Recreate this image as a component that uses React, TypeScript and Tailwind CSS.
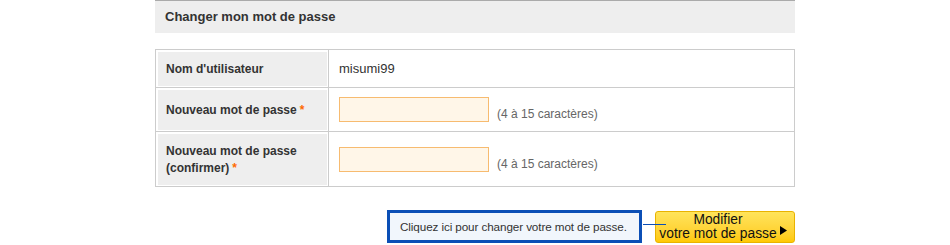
import React from 'react';

const FONT = '[font-family:"Liberation_Sans",Arial,sans-serif]';

function Row({ label, children, h }: { label: React.ReactNode; children: React.ReactNode; h: string }) {
  return (
    <div className={`flex ${h} border-b border-[#cccccc] last:border-b-0`}>
      <div className="w-[173px] shrink-0 border-r border-[#cccccc] pl-[2px] pr-[1px] pt-[2px] pb-[1px]">
        <div className="flex h-full items-center bg-[#eeeeee] pl-[8px] text-[12px] font-bold leading-[17px] text-[#333333]">
          {label}
        </div>
      </div>
      <div className="flex flex-1 items-center pl-[10px]">{children}</div>
    </div>
  );
}

function PasswordField() {
  return (
    <div className="flex items-end">
      <input
        type="password"
        className="h-[25px] w-[150px] border border-[#f7bb70] bg-[#fff6e8] outline-none"
      />
      <span className="mb-[1px] ml-[8px] text-[12px] leading-[14px] text-[#666666]">(4 à 15 caractères)</span>
    </div>
  );
}

const Star = () => <span className="ml-[3px] text-[#ff6a00]">*</span>;

export default function App() {
  return (
    <div className={`h-[245px] w-[950px] bg-white ${FONT}`}>
      <div className="mx-auto w-[640px]">
        <div className="flex h-[33px] items-center border-t border-[#aaaaaa] bg-[#eeeeee] pl-[10px] text-[13px] font-bold text-[#333333]">
          Changer mon mot de passe
        </div>

        <div className="mt-[16px] border border-[#cccccc]">
          <Row label="Nom d'utilisateur" h="h-[38px]">
            <span className="text-[13px] text-[#333333]">misumi99</span>
          </Row>
          <Row
            label={
              <span>
                Nouveau mot de passe<Star />
              </span>
            }
            h="h-[44px]"
          >
            <PasswordField />
          </Row>
          <Row
            label={
              <span>
                Nouveau mot de passe
                <br />
                (confirmer)<Star />
              </span>
            }
            h="h-[54px]"
          >
            <PasswordField />
          </Row>
        </div>

        <div className="mt-[23px] flex items-start justify-end">
          <div className="mr-[13px] flex h-[33px] w-[255px] items-center border-[3px] border-[#0b4fb6] bg-[#f1f6fc] pl-[10px] text-[11.7px] tracking-[-0.1px] text-[#333333]">
            Cliquez ici pour changer votre mot de passe.
          </div>
          <button className="relative mt-[1px] flex h-[32px] w-[140px] items-center justify-center gap-[3px] rounded-[3px] border border-[#e9b300] bg-gradient-to-b from-[#ffe45a] to-[#ffc900] pr-[4px] text-[13.8px] leading-[14px] text-[#111111]">
            <span className="absolute left-[-13px] top-[12px] h-[1px] w-[23px] bg-[#0b4fb6]" />
            <span className="text-center">
              Modifier
              <br />
              votre mot de passe
            </span>
            <svg width="7" height="9" viewBox="0 0 7 9" className="mt-[6px] shrink-0">
              <polygon points="0,0 7,4.5 0,9" fill="#000" />
            </svg>
          </button>
        </div>
      </div>
    </div>
  );
}
